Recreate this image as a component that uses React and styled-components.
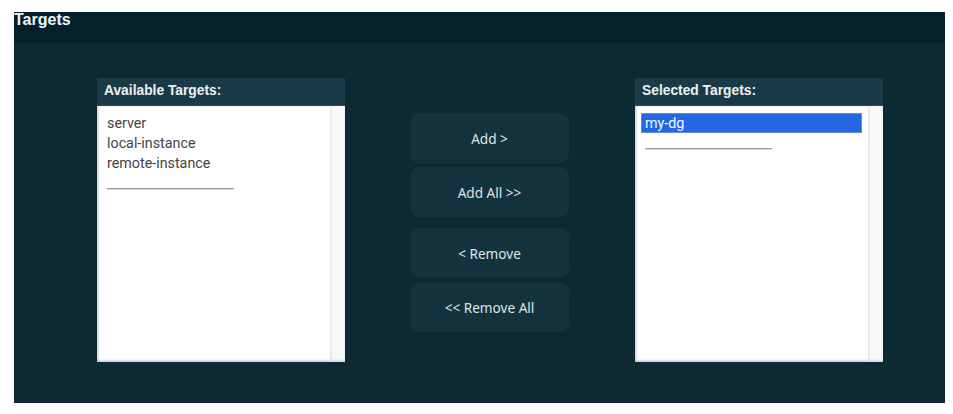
import styled, { createGlobalStyle } from 'styled-components'

const GlobalStyle = createGlobalStyle`
	body {
		margin: 0;
		background: #fff;
		font-family: "Liberation Sans", Arial, sans-serif;
	}
`

const available = ['server', 'local-instance', 'remote-instance']
const selected = ['my-dg']

const TargetList = ({ title, items, picked }) => (
	<ListPanel>
		<ListHeader>{title}</ListHeader>
		<ListBox>
			<Items>
				{items.map((item, index) => (
					<Item key={item + index} picked={picked === item}>{item}</Item>
				))}
				<Divider />
			</Items>
			<Scrollbar />
		</ListBox>
	</ListPanel>
)

const App = () => {
	return (
		<>
			<GlobalStyle />
			<Panel>
				<Header>Targets</Header>
				<Body>
					<TargetList title="Available Targets:" items={available} />
					<Controls>
						<ButtonGroup>
							<Button>Add &gt;</Button>
							<Button>Add All &gt;&gt;</Button>
						</ButtonGroup>
						<ButtonGroup>
							<Button>&lt; Remove</Button>
							<Button>&lt;&lt; Remove All</Button>
						</ButtonGroup>
					</Controls>
					<TargetList title="Selected Targets:" items={selected} picked="my-dg" />
				</Body>
			</Panel>
		</>
	)
}

export default App

const Panel = styled.div`
	margin: 12px 0 0 14px;
	width: 931px;
	height: 391px;
	display: flex;
	flex-direction: column;
	background: #0c2934;
`

const Header = styled.div`
	height: 30px;
	background: #04202c;
	color: #f2f4f5;
	font-weight: 700;
	font-size: 16px;
	line-height: 16px;
`

const Body = styled.div`
	display: grid;
	grid-template-columns: 248px 1fr 248px;
	align-items: start;
	padding: 36px 62px 0 83px;
`

const ListPanel = styled.div`
	display: flex;
	flex-direction: column;
`

const ListHeader = styled.div`
	height: 28px;
	background: #1b3a47;
	color: #eef2f4;
	font-weight: 700;
	font-size: 13.8px;
	line-height: 26px;
	padding-left: 7px;
	border-bottom: 1px solid #2d4955;
	box-sizing: border-box;
`

const ListBox = styled.div`
	height: 256px;
	display: flex;
	background: #fff;
	box-shadow: inset 2px 0 2px rgba(0, 0, 0, 0.12), inset 0 -2px 2px rgba(0, 0, 0, 0.15);
`

const Items = styled.div`
	flex: 1;
	padding: 7px 6px 0 6px;
	display: flex;
	flex-direction: column;
`

const Item = styled.div`
	box-sizing: border-box;
	height: 20px;
	line-height: 18px;
	font-family: Roboto, "Liberation Sans", sans-serif;
	font-size: 14.3px;
	padding-left: 3px;
	color: ${props => props.picked ? '#f4f7ff' : '#444'};
	background: ${props => props.picked ? '#2467e0' : 'transparent'};
	border: 1px solid ${props => props.picked ? '#5b8df0' : 'transparent'};
`

const Divider = styled.div`
	width: 127px;
	height: 1px;
	margin: 15px 0 0 4px;
	background: #9f9f9f;
	box-shadow: 0 1px 0 #d8d8d8;
`

const Scrollbar = styled.div`
	width: 14px;
	background: #f8f8f8;
	border-left: 1px solid #e6e6e6;
	box-shadow: inset 0 -2px 2px rgba(0, 0, 0, 0.12);
`

const Controls = styled.div`
	justify-self: center;
	margin-top: 35px;
	margin-right: 1px;
	display: flex;
	flex-direction: column;
	gap: 11px;
`

const ButtonGroup = styled.div`
	display: flex;
	flex-direction: column;
	gap: 4px;
`

const Button = styled.button`
	width: 159px;
	height: 50px;
	border: none;
	border-radius: 9px;
	background: #15323f;
	color: #dfe5e8;
	font-family: "Noto Sans", "Open Sans", sans-serif;
	font-size: 13.6px;
	cursor: pointer;
`
